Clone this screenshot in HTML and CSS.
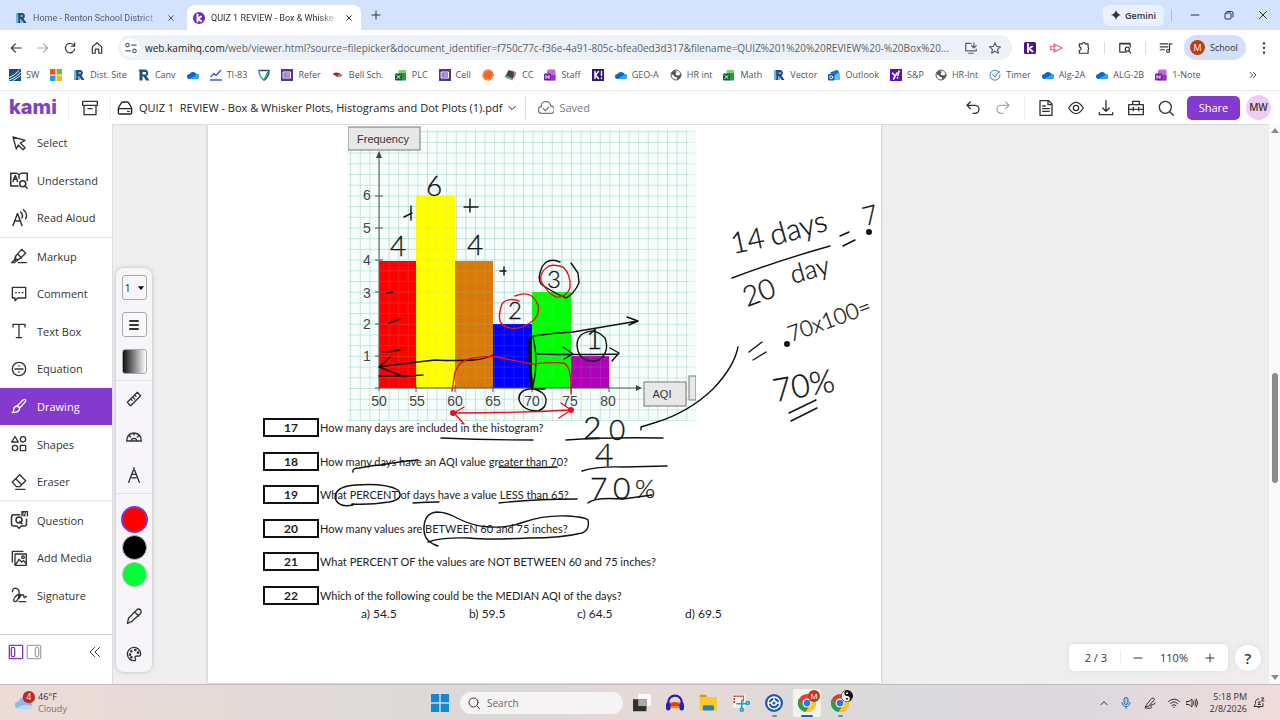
FILE: index.html
```html
<!DOCTYPE html>
<html lang="en">
<head>
	<meta charset="UTF-8">
	<meta name="viewport" content="width=device-width, initial-scale=1.0">
	<title>QUIZ 1 REVIEW - Box &amp; Whisker Plots</title>
	<link rel="stylesheet" href="styles.css">
</head>
<body>

<!-- shared icons -->
<svg class="sprite" aria-hidden="true">
	<symbol id="i-close" viewBox="0 0 24 24"><path d="M5 5l14 14M19 5L5 19"/></symbol>
	<symbol id="i-plus" viewBox="0 0 24 24"><path d="M12 4v16M4 12h16"/></symbol>
	<symbol id="i-minus" viewBox="0 0 24 24"><path d="M4 12h16"/></symbol>
	<symbol id="i-restore" viewBox="0 0 24 24"><rect x="4" y="8" width="12" height="12" rx="2"/><path d="M8 5h9a3 3 0 0 1 3 3v8"/></symbol>
	<symbol id="i-back" viewBox="0 0 24 24"><path d="M21 12H4M11 5l-7 7 7 7"/></symbol>
	<symbol id="i-forward" viewBox="0 0 24 24"><path d="M3 12h17M13 5l7 7-7 7"/></symbol>
	<symbol id="i-reload" viewBox="0 0 24 24"><path d="M19 8a8 8 0 1 0 1 6M20 3v6h-6"/></symbol>
	<symbol id="i-home" viewBox="0 0 24 24"><path d="M4 10l8-7 8 7v11h-5v-7H9v7H4z"/></symbol>
	<symbol id="i-tune" viewBox="0 0 24 24"><circle cx="6" cy="7" r="3"/><path d="M13 7h8M3 17h8"/><circle cx="18" cy="17" r="3"/></symbol>
	<symbol id="i-install" viewBox="0 0 24 24"><path d="M12 4H3v13h18v-3M8 21h8M17 3v9M13 8l4 4 4-4"/></symbol>
	<symbol id="i-star" viewBox="0 0 24 24"><path d="M12 3l2.700 6.200 6.700.6-5.100 4.500 1.500 6.600L12 17.400 6.200 20.900l1.500-6.600L2.600 9.800l6.700-.6z"/></symbol>
	<symbol id="i-puzzle" viewBox="0 0 24 24"><path d="M4 5h5a2.500 2.500 0 0 1 5 0h5v6a2.500 2.500 0 0 1 0 4v6H4v-5a3 3 0 0 0 0-6z"/></symbol>
	<symbol id="i-lens" viewBox="0 0 24 24"><path d="M11 19H3V4h18v6M3 5h18M14 19H9"/><circle cx="16" cy="14" r="3.500"/><path d="M19 17l3 4"/></symbol>
	<symbol id="i-playlist" viewBox="0 0 24 24"><path d="M2 5h13M2 10h13M2 15h7M18 17V5h4"/><circle cx="15.500" cy="17" r="2.500"/></symbol>
	<symbol id="i-dots" viewBox="0 0 24 24"><g fill="currentColor" stroke="none"><circle cx="12" cy="4" r="2"/><circle cx="12" cy="12" r="2"/><circle cx="12" cy="20" r="2"/></g></symbol>
	<symbol id="b-renton" viewBox="0 0 24 24"><g stroke="none"><path fill="#78b4d8" d="M2 2h12v20H2z"/><path fill="#1d4f78" d="M6 2h9a6 6 0 0 1 2 11l6 9h-6l-5-8h-2v8H5l2-4zM11 6v4h4V6z"/></g></symbol>
	<symbol id="b-cloud" viewBox="0 0 24 24"><g stroke="none"><path fill="#1263c4" d="M5 20a5 5 0 0 1 0-10 8 8 0 0 1 14 0 5 5 0 0 1 0 10z"/><path fill="#28a8f0" d="M5 20L20 10a5 5 0 0 1-1 10z"/></g></symbol>
	<symbol id="b-list" viewBox="0 0 24 24"><path stroke="none" fill="#57319b" d="M0 0h24v24H0z"/><path stroke="#fff" d="M5 6h14v12H5zM10 10h7M10 14h7M7 10h1M7 14h1"/></symbol>
	<symbol id="b-excel" viewBox="0 0 24 24"><g stroke="none"><path fill="#7bd067" d="M7 2h15v18H7z"/><path fill="#259a3e" d="M12 8h10v15H12z"/><rect fill="#0d6330" y="9" width="14" height="14" rx="2"/></g><path stroke="#fff" d="M4 13l6 6M10 13l-6 6"/></symbol>
	<symbol id="b-onenote" viewBox="0 0 24 24"><g stroke="none"><rect fill="#c665dc" x="6" y="1" width="17" height="22" rx="3"/><path fill="#9332c0" d="M14 12h9v11h-9z"/><rect fill="#7619a0" y="9" width="14" height="14" rx="2"/></g><path stroke="#fff" d="M4 19v-6l6 6v-6"/></symbol>
	<symbol id="b-globe" viewBox="0 0 24 24"><circle cx="12" cy="12" r="10" stroke="#555"/><path stroke="none" fill="#555" d="M4 6l6-3 4 3-3 2 1 4 6 1 3-3v7l-7 5v-5l-5-2-3-4-3 1z"/></symbol>
	<symbol id="s-chrome" viewBox="0 0 24 24"><g stroke="none"><circle cx="12" cy="12" r="12" fill="#e23f31"/><path fill="#2b9e4b" d="M1.600 6L7 15l5 3-2 6A12 12 0 0 1 1.600 6z"/><path fill="#fbc81e" d="M12 7h11a12 12 0 0 1-13 17l6-9z"/><circle cx="12" cy="12" r="6" fill="#fff"/><circle cx="12" cy="12" r="4.500" fill="#2b78e4"/></g></symbol>
</svg>

<header class="browser">
	<div class="tabs">
		<div class="tab">
			<svg class="icon icon-s"><use href="#b-renton"/></svg>
			<span class="tab-title">Home - Renton School District</span>
			<button class="plain" aria-label="Close tab"><svg class="icon icon-x"><use href="#i-close"/></svg></button>
		</div>
		<div class="tab active">
			<svg class="icon icon-s" viewBox="0 0 24 24"><circle cx="12" cy="12" r="12" fill="#6f2bab" stroke="none"/><path stroke="#fff" stroke-width="4" d="M9 5v14M16 9l-6 4 6 5"/></svg>
			<span class="tab-title">QUIZ 1 REVIEW - Box &amp; Whiske</span>
			<button class="plain" aria-label="Close tab"><svg class="icon icon-x"><use href="#i-close"/></svg></button>
		</div>
		<button class="plain new-tab" aria-label="New tab"><svg class="icon icon-s"><use href="#i-plus"/></svg></button>
		<button class="gemini"><svg class="icon icon-g" viewBox="0 0 24 24"><path fill="currentColor" stroke="none" d="M12 0q2 10 12 12-10 2-12 12-2-10-12-12Q10 10 12 0z"/></svg>Gemini</button>
		<span class="tab-sep"></span>
		<div class="window-buttons">
			<button class="plain" aria-label="Minimize"><svg class="icon icon-s"><use href="#i-minus"/></svg></button>
			<button class="plain" aria-label="Restore"><svg class="icon icon-s"><use href="#i-restore"/></svg></button>
			<button class="plain" aria-label="Close"><svg class="icon icon-s"><use href="#i-close"/></svg></button>
		</div>
	</div>

	<div class="toolbar">
		<button class="plain nav-btn" aria-label="Back"><svg class="icon"><use href="#i-back"/></svg></button>
		<button class="plain nav-btn dim" aria-label="Forward"><svg class="icon"><use href="#i-forward"/></svg></button>
		<button class="plain nav-btn" aria-label="Reload"><svg class="icon"><use href="#i-reload"/></svg></button>
		<button class="plain nav-btn" aria-label="Home"><svg class="icon"><use href="#i-home"/></svg></button>
		<div class="address">
			<span class="site-info"><svg class="icon icon-s"><use href="#i-tune"/></svg></span>
			<span class="url"><b>web.kamihq.com</b>/web/viewer.html?source=filepicker&amp;document_identifier=f750c77c-f36e-4a91-805c-bfea0ed3d317&amp;filename=QUIZ%201%20%20REVIEW%20-%20Box%20...</span>
			<button class="plain" aria-label="Install app"><svg class="icon"><use href="#i-install"/></svg></button>
			<button class="plain" aria-label="Bookmark"><svg class="icon icon-s"><use href="#i-star"/></svg></button>
		</div>
		<button class="plain nav-btn" aria-label="Kami extension"><svg class="icon kami-ext" viewBox="0 0 24 24"><rect width="24" height="24" rx="3" fill="#4c177d" stroke="none"/><path stroke="#fff" stroke-width="4" d="M8 4v16M16 9l-6 4 7 6"/></svg></button>
		<button class="plain nav-btn pink" aria-label="Screencastify"><svg class="icon" viewBox="0 0 24 24"><path d="M7 5l14 7-14 7zM1 9h9M1 15h9M1 9v6"/></svg></button>
		<button class="plain nav-btn" aria-label="Extensions"><svg class="icon"><use href="#i-puzzle"/></svg></button>
		<span class="bar-sep"></span>
		<button class="plain nav-btn" aria-label="Search page"><svg class="icon"><use href="#i-lens"/></svg></button>
		<span class="bar-sep"></span>
		<button class="plain nav-btn" aria-label="Media"><svg class="icon"><use href="#i-playlist"/></svg></button>
		<button class="profile"><span class="avatar">M</span>School</button>
		<button class="plain nav-btn" aria-label="Menu"><svg class="icon icon-s"><use href="#i-dots"/></svg></button>
	</div>

	<nav class="bookmarks">
		<div class="bookmark-list">
			<a href="#"><svg class="icon icon-s" viewBox="0 0 24 24"><path stroke="none" fill="#164f83" d="M0 0h24v24H0z"/><path stroke="#fff" d="M1 17Q11 13 20 3M1 22Q14 17 23 7M8 23q8-4 15-10"/></svg>SW</a>
			<a href="#" aria-label="Microsoft"><svg class="icon icon-s" viewBox="0 0 24 24"><g stroke="none"><path fill="#ee5223" d="M0 0h11v11H0z"/><path fill="#80b91d" d="M13 0h11v11H13z"/><path fill="#14a1e8" d="M0 13h11v11H0z"/><path fill="#fcb716" d="M13 13h11v11H13z"/></g></svg></a>
			<a href="#"><svg class="icon icon-s"><use href="#b-renton"/></svg>Dist. Site</a>
			<a href="#"><svg class="icon icon-s" viewBox="0 0 24 24"><path fill="#20547d" stroke="none" d="M1 1h14a7 7 0 0 1 2 13l6 9h-7l-5-8H9v8H3V6zM9 6v5h5a2 2 0 0 0 0-5z"/></svg>Canv</a>
			<a href="#" aria-label="OneDrive"><svg class="icon icon-s"><use href="#b-cloud"/></svg></a>
			<a href="#"><svg class="icon icon-s" viewBox="0 0 24 24"><path stroke="#3f5fc0" stroke-width="3" d="M2 15l6-6 4 4 9-10M0 22h24"/></svg>TI-83</a>
			<a href="#" aria-label="Shield"><svg class="icon icon-s" viewBox="0 0 24 24"><path stroke="#2c4961" stroke-width="3" d="M2 3h20q0 13-10 19"/><path stroke="#2ca993" stroke-width="3" d="M2 3q0 13 10 19l7-15"/></svg></a>
			<a href="#"><svg class="icon icon-s"><use href="#b-list"/></svg>Refer</a>
			<a href="#"><svg class="icon icon-s" viewBox="0 0 24 24"><g stroke="none"><path fill="#a0283a" d="M1 10q9-6 18 1l-8 5z"/><path fill="#999" d="M11 11h12l-8 7z"/></g></svg>Bell Sch.</a>
			<a href="#"><svg class="icon icon-s"><use href="#b-excel"/></svg>PLC</a>
			<a href="#"><svg class="icon icon-s"><use href="#b-list"/></svg>Cell</a>
			<a href="#" aria-label="Sun"><svg class="icon icon-s" viewBox="0 0 24 24"><circle cx="12" cy="12" r="8" fill="#ef6a1f" stroke="none"/><circle cx="12" cy="12" r="9" stroke="#ef6a1f" stroke-width="5" stroke-linecap="butt" stroke-dasharray="3 1"/></svg></a>
			<a href="#"><svg class="icon icon-s" viewBox="0 0 24 24"><g stroke="none"><path fill="#444" d="M7 2l14 4-6 16L0 16z"/><path fill="#c77a98" d="M17 5l6 2-5 13z"/><path fill="#60b49a" d="M3 13l14 7-2 3-13-5z"/></g></svg>CC</a>
			<a href="#"><svg class="icon icon-s"><use href="#b-onenote"/></svg>Staff</a>
			<a href="#" aria-label="Kahoot"><svg class="icon icon-s" viewBox="0 0 24 24"><path fill="#321377" stroke="none" d="M0 0h24v24H0z"/><path stroke="#fff" stroke-width="3" d="M6 5v14M13 5l-6 7 6 7M19 5v8M19 18v1"/></svg></a>
			<a href="#"><svg class="icon icon-s"><use href="#b-cloud"/></svg>GEO-A</a>
			<a href="#"><svg class="icon icon-s"><use href="#b-globe"/></svg>HR int</a>
			<a href="#"><svg class="icon icon-s"><use href="#b-excel"/></svg>Math</a>
			<a href="#"><svg class="icon icon-s"><use href="#b-renton"/></svg>Vector</a>
			<a href="#"><svg class="icon icon-s" viewBox="0 0 24 24"><g stroke="none"><path fill="#58c4f3" d="M4 7l14-6 6 8v13H8z"/><path fill="#2368cf" d="M5 7L19 2l3 5-14 8z"/><rect fill="#1659bb" y="10" width="13" height="13" rx="2"/></g><circle cx="6.500" cy="16.500" r="3" stroke="#fff"/></svg>Outlook</a>
			<a href="#"><svg class="icon icon-s" viewBox="0 0 24 24"><path fill="#5714b8" stroke="none" d="M0 0h24v24H0z"/><path stroke="#fff" stroke-width="3" d="M5 8l5 6M14 8L7 20M18 4l-2 9M15 17v1"/></svg>S&amp;P</a>
			<a href="#"><svg class="icon icon-s"><use href="#b-globe"/></svg>HR-Int</a>
			<a href="#"><svg class="icon icon-s" viewBox="0 0 24 24"><path stroke="#3d7cc0" d="M21 8a10 10 0 1 0 1 4M7 11l5 5L21 4"/></svg>Timer</a>
			<a href="#"><svg class="icon icon-s"><use href="#b-cloud"/></svg>Alg-2A</a>
			<a href="#"><svg class="icon icon-s"><use href="#b-cloud"/></svg>ALG-2B</a>
			<a href="#"><svg class="icon icon-s"><use href="#b-onenote"/></svg>1-Note</a>
		</div>
		<button class="plain more" aria-label="More bookmarks"><svg class="icon icon-x" viewBox="0 0 24 24"><path d="M3 4l8 8-8 8M13 4l8 8-8 8"/></svg></button>
	</nav>
</header>

<header class="kami-bar">
	<a class="logo" href="#">kami</a>
	<button class="plain archive" aria-label="Archive"><svg class="icon" viewBox="0 0 24 24"><path d="M1 2h22v6H1zM3 8v14h18V8M9 13h6"/></svg></button>
	<button class="plain doc-name">
		<svg class="icon" viewBox="0 0 24 24"><path d="M2 12l4-7q1-2 3-2h6q2 0 3 2l4 7v7q0 2-2 2H4q-2 0-2-2zM2 13h20M16 17h1M19 17h0"/></svg>
		<span>QUIZ 1  REVIEW - Box &amp; Whisker Plots, Histograms and Dot Plots (1).pdf</span>
		<svg class="icon icon-x" viewBox="0 0 24 24"><path d="M2 7l10 10L22 7"/></svg>
	</button>
	<div class="saved"><svg class="icon" viewBox="0 0 24 24"><path d="M6 20a5 5 0 0 1-1-10 7 7 0 0 1 14-1 5.500 5.500 0 0 1 0 11zM8 13l3 3 5-5"/></svg>Saved</div>
	<div class="kami-tools">
		<button class="plain" aria-label="Undo"><svg class="icon" viewBox="0 0 24 24"><path d="M8 3L3 8l5 5M3 8h12a6 6 0 0 1 0 12h-3"/></svg></button>
		<button class="plain dim" aria-label="Redo"><svg class="icon" viewBox="0 0 24 24"><path d="M16 3l5 5-5 5M21 8H9a6 6 0 0 0 0 12h3"/></svg></button>
		<span class="kami-sep"></span>
		<button class="plain" aria-label="Notes"><svg class="icon" viewBox="0 0 24 24"><path d="M3 1h13l5 5v17H3zM15 2v5h5M7 9h4M7 13h10M7 17h10"/></svg></button>
		<button class="plain" aria-label="View"><svg class="icon" viewBox="0 0 24 24"><path d="M1 12q11-17 22 0-11 17-22 0z"/><circle cx="12" cy="12" r="4"/></svg></button>
		<button class="plain" aria-label="Download"><svg class="icon" viewBox="0 0 24 24"><path d="M12 1v16M7 12l5 5 5-5M2 19v3h20v-3"/></svg></button>
		<button class="plain" aria-label="Toolbox"><svg class="icon" viewBox="0 0 24 24"><path d="M1 7h22v15H1zM7 7V2h10v5M1 14h6M10 14h4M17 14h6M8 11v5M16 11v5"/></svg></button>
		<button class="plain" aria-label="Search"><svg class="icon" viewBox="0 0 24 24"><circle cx="11" cy="11" r="9"/><path d="M18 18l5 5"/></svg></button>
		<button class="share">Share</button>
		<span class="user">MW</span>
	</div>
</header>

<main>
	<aside class="sidebar">
		<nav class="tools">
			<a href="#"><svg class="icon" viewBox="0 0 24 24"><path d="M3 3l18 5-7 4 7 7-3 3-7-7-3 6z"/></svg>Select</a>
			<a href="#"><svg class="icon icon-l" viewBox="0 0 24 24"><path d="M11 20H1V3h8l3 2 3-2h8v10M12 5v5M4 14l3-8 2 5 1 3M5 11h4"/><circle cx="17" cy="17" r="4"/><path d="M20 20l3 3"/></svg>Understand</a>
			<a href="#"><svg class="icon icon-l" viewBox="0 0 24 24"><path d="M4 22l6-16 6 16M6 16h8M14 4q4 3 2 8M18 1q6 5 3 12"/></svg>Read Aloud</a>
			<a class="group" href="#"><svg class="icon" viewBox="0 0 24 24"><path d="M7 12L16 2l6 6-10 9H7zM7 12l-2 6 3 2 4-3M5 18l-4 4h4l2-2M11 22h12M10 9l6 6"/></svg>Markup</a>
			<a href="#"><svg class="icon" viewBox="0 0 24 24"><path d="M2 2h20v16H10l-4 4v-4H2zM7 10h1M12 10h1M17 10h1"/></svg>Comment</a>
			<a href="#"><svg class="icon" viewBox="0 0 24 24"><path d="M3 6V2h18v4M12 2v20M8 22h8"/></svg>Text Box</a>
			<a href="#"><svg class="icon" viewBox="0 0 24 24"><circle cx="12" cy="12" r="10"/><path d="M6 12h12M12 7v1M12 16v1"/></svg>Equation</a>
			<a class="current" href="#"><svg class="icon" viewBox="0 0 24 24"><path d="M9 12L18 3q5-2 4 2l-9 10zM9 12q2 0 4 3 0 7-11 7 3-2 2-5 0-4 5-5z"/></svg>Drawing</a>
			<a href="#"><svg class="icon" viewBox="0 0 24 24"><path d="M6 1l5 8H1zM14 14h8v8h-8z"/><circle cx="18" cy="5" r="4"/><circle cx="6" cy="18" r="4"/></svg>Shapes</a>
			<a href="#"><svg class="icon" viewBox="0 0 24 24"><path d="M2 12L13 1l9 9-9 9H8zM7 7l9 9M7 23h14"/></svg>Eraser</a>
			<a class="group" href="#"><svg class="icon icon-l" viewBox="0 0 24 24"><path d="M13 5H5Q2 5 2 8v9q0 3 3 3h4l3 3 3-3h4q3 0 3-3v-6"/><circle cx="12" cy="12" r="4"/><path d="M13 14l3 3"/><path fill="currentColor" stroke="none" d="M15 0h9v7h-9z"/><path stroke="#fff" stroke-width="1" d="M17 6l2-4 2 4M22 2v4"/></svg>Question</a>
			<a href="#"><svg class="icon" viewBox="0 0 24 24"><path d="M18 2H2v16M6 6h17v17H6zM7 22l5-8 4 4 3-2 4 5"/><circle cx="18" cy="11" r="2"/></svg>Add Media</a>
			<a href="#"><svg class="icon" viewBox="0 0 24 24"><path d="M2 7Q3 1 8 2q5 1 4 9-1 11-6 11-4-1 0-7 4-5 8-4 0 5-2 6 4-7 7-5 0 4 1 4l3-2M12 22h10"/></svg>Signature</a>
		</nav>
		<div class="side-footer">
			<button class="plain violet" aria-label="Left panel"><svg class="icon" viewBox="0 0 24 24"><rect x="2" y="2" width="20" height="20" rx="1"/><rect x="5" y="5" width="5" height="14" rx="2"/></svg></button>
			<button class="plain dim" aria-label="Right panel"><svg class="icon" viewBox="0 0 24 24"><rect x="2" y="2" width="20" height="20" rx="1"/><rect x="14" y="5" width="5" height="14" rx="2"/></svg></button>
			<button class="plain collapse" aria-label="Collapse"><svg class="icon icon-s" viewBox="0 0 24 24"><path d="M11 3l-9 9 9 9M21 3l-9 9 9 9"/></svg></button>
		</div>
	</aside>

	<section class="viewer">
		<div class="palette">
			<label class="size-box"><select aria-label="Line size"><option>1</option></select><svg viewBox="0 0 8 5"><path d="M0 0h8L4 5z"/></svg></label>
			<button class="square" aria-label="Line style"><svg class="icon icon-s" viewBox="0 0 24 24"><path stroke-width="4" d="M4 4h16M4 12h16M4 20h16"/></svg></button>
			<button class="square shade" aria-label="Opacity"></button>
			<div class="palette-group">
				<button class="plain" aria-label="Ruler"><svg class="icon" viewBox="0 0 24 24"><path d="M2 17L17 2l5 5L7 22zM13 6l2 2M10 9l3 3M7 12l2 2"/></svg></button>
				<button class="plain" aria-label="Protractor"><svg class="icon" viewBox="0 0 24 24"><path d="M1 18q0-11 11-12 11 1 11 12zM8 18q0-4 4-4t4 4M12 6v3M5 10l2 2M19 10l-2 2"/></svg></button>
				<button class="plain" aria-label="Compass"><svg class="icon" viewBox="0 0 24 24"><path d="M12 1v3M4 23l7-18h2l7 18M7 15q5 3 10 0M9 11h6"/></svg></button>
			</div>
			<div class="palette-colors">
				<button class="swatch red" aria-label="Red"></button>
				<button class="swatch black" aria-label="Black"></button>
				<button class="swatch green" aria-label="Green"></button>
			</div>
			<div class="palette-more">
				<button class="plain" aria-label="Pencil"><svg class="icon" viewBox="0 0 24 24"><path d="M4 15L16 3q3-3 6 0 2 3-1 6L9 20l-7 3zM13 6l6 6"/></svg></button>
				<button class="plain" aria-label="Colors"><svg class="icon" viewBox="0 0 24 24"><path d="M13 22A10 10 0 1 1 22 12q0 4-5 3-5 0-3 4 1 3-1 3z"/><circle cx="8" cy="8" r="1"/><circle cx="14" cy="6" r="1"/><circle cx="18" cy="10" r="1"/><circle cx="6" cy="13" r="1"/><circle cx="8" cy="17" r="1"/></svg></button>
			</div>
		</div>

		<article class="page">
			<svg class="chart" viewBox="348 124 348 297" role="img" aria-label="Histogram of AQI values">
				<defs>
					<pattern id="grid" x="379" y="388" width="9.600" height="10.700" patternUnits="userSpaceOnUse">
						<path d="M0 0v10.700" stroke="#a9c2c4"/>
						<path d="M0 0h9.600" stroke="#8fd6c4"/>
					</pattern>
				</defs>
				<path fill="#f6fefc" d="M348 130h348v291H348z"/>
				<path fill="url(#grid)" d="M348 130h340v291H348z"/>
				<path fill="url(#grid)" opacity=".5" d="M688 130h8v291h-8z"/>
				<g class="bars">
					<path fill="#f00" d="M379 261h37v127h-37z"/>
					<path fill="#ff0" d="M416 196h39v192h-39z"/>
					<path fill="#d97b0b" d="M455 261h38v127h-38z"/>
					<path fill="#00f" d="M493 324h39v64h-39z"/>
					<path fill="#0f0" d="M532 292h39v96h-39z"/>
					<path fill="#b000b8" d="M571 356h38v32h-38z"/>
				</g>
				<path fill="url(#grid)" opacity=".3" d="M379 196h230v192H379z"/>
				<path class="axis" d="M379 391V155M375 388h262M375 356h8M375 324h8M375 292h8M375 260h8M375 228h8M375 196h8M416 385v7M455 385v7M493 385v7M532 385v7M571 385v7M609 385v7"/>
				<path fill="#444" d="M376 158l3-7 3 7zM636 385l6 3-6 3z"/>
				<g class="ticks">
					<text x="367" y="200">6</text><text x="367" y="233">5</text><text x="367" y="265">4</text>
					<text x="367" y="298">3</text><text x="367" y="329">2</text><text x="367" y="361">1</text>
					<text x="379" y="406">50</text><text x="417" y="406">55</text><text x="455" y="406">60</text><text x="493" y="406">65</text>
					<text x="532" y="406">70</text><text x="570" y="406">75</text><text x="608" y="406">80</text>
				</g>
				<g class="axis-box">
					<rect x="348" y="127" width="72" height="23"/><text x="383" y="143">Frequency</text>
					<rect x="689" y="376" width="7" height="24"/>
					<rect x="644" y="382" width="42" height="24"/><text x="662" y="398">AQI</text>
				</g>
			</svg>

			<ol class="questions">
				<li><b>17</b>How many days are included in the histogram?</li>
				<li><b>18</b>How many days have an AQI value greater than 70?</li>
				<li><b>19</b>What PERCENT of days have a value LESS than 65?</li>
				<li><b>20</b>How many values are BETWEEN 60 and 75 inches?</li>
				<li><b>21</b>What PERCENT OF the values are NOT BETWEEN 60 and 75 inches?</li>
				<li><b>22</b>Which of the following could be the MEDIAN AQI of the days?</li>
			</ol>
			<div class="choices"><span>a) 54.5</span><span>b) 59.5</span><span>c) 64.5</span><span>d) 69.5</span></div>

			<!-- pen annotations -->
			<svg class="ink" viewBox="208 124 673 560">
				<g class="pen">
					<path d="M404 218l8-4M411 207v14M464 208h14M470 200v13M500 272h6M504 268v8"/>
					<path d="M387 294l6-1M389 324l11-4M383 353q9 0 17-2"/>
					<path d="M379 368q28-4 56-7 22 1 38 0 13-1 20-5M390 358l-11 10 26 10M379 377h28l16-1"/>
					<path stroke-width="3" d="M530 340q-1 25 2 48"/>
					<path d="M533 338q6 24 0 49"/>
					<path d="M533 337q20-3 40-4l65-11M627 318l11 4-9 4M537 355q40 1 81 0M563 348l10 7-9 5M610 349l9 5-7 8"/>
					<path d="M581 336q13-9 24 3 5 14-6 22-17 4-21-9-3-10 3-16"/>
					<path d="M560 263q-12-5-18 5-5 12-1 17 11 8 25 14 8-4 13-15l-1-10-7-10"/>
					<path d="M545 390h-16q-11 2-10 11 4 11 19 11 9-3 8-12-1-7-12-10"/>
					<path d="M441 439q45 2 92 2M566 441q40-3 97-2M582 472q16-5 41-4l44-1M588 504q6-6 35-4l29-4"/>
					<path d="M353 473q-1-4 6-4 15-3 22-3 15-3 37-5M499 468q25 1 58 0M413 504q13-1 26-1M499 504q35-4 78-4"/>
					<path d="M353 506q-15 3-18-7 0-12 21-13 30-2 42 5 7 9-9 12-19 3-37 2"/>
					<path d="M438 547q-13-4-14-15-1-18 13-19 9 0 20 6 15 8 32 9 20 1 35-5 20-7 43-6 18 1 21 4 2 10-6 13-20 5-53 5-40 2-60 0-27-1-41 4"/>
					<path d="M641 431v-3l16-5q32-10 56-33 21-22 25-42"/>
					<path d="M732 279q45-17 98-32M840 237l9-4M843 247l12-6M749 353l13-10M753 361l13-8M789 414l27-13M791 422l26-13"/>
					<circle class="dot" cx="869" cy="233" r="2"/><circle class="dot" cx="787" cy="345" r="2"/>
				</g>
				<g class="pen red-pen">
					<path d="M452 392q1-6 3-19 4-12 18-14 12-2 24-1 13 3 36 7 20-2 30-1 9 2 8 31"/>
					<path d="M519 302q-12-4-17 3-7 20 5 23 12 5 27-7 8-10 2-19-6-11-21-5"/>
					<path d="M549 267q-10 6-8 15 7 13 15 16 10 1 14-9 1-14-7-21-8-3-14-1"/>
					<path d="M453 414q60 0 118-3M464 408l-10 6 10 11M561 404l10 7-12 8"/>
					<circle class="dot" cx="453" cy="414" r="2"/><circle class="dot" cx="571" cy="411" r="2"/>
				</g>
				<g class="hand">
					<text font-size="28" x="426" y="197">6</text>
					<text font-size="28" x="390" y="257">4</text>
					<text font-size="28" x="467" y="256">4</text>
					<text font-size="24" x="547" y="289">3</text>
					<text font-size="24" x="508" y="320">2</text>
					<text font-size="28" x="586" y="350">1</text>
					<text font-size="32" x="583" y="440">2</text>
					<text font-size="28" x="609" y="441">0</text>
					<text font-size="32" x="595" y="467">4</text>
					<text font-size="30" x="590" y="500">7</text>
					<text font-size="30" x="613" y="500">0</text>
					<text font-size="26" x="635" y="499">%</text>
					<text font-size="29" transform="translate(733 255) rotate(-12)">14</text>
					<text font-size="30" transform="translate(773 247) rotate(-16)">days</text>
					<text font-size="26" transform="translate(865 227) rotate(-14)">7</text>
					<text font-size="28" transform="translate(747 308) rotate(-20)">20</text>
					<text font-size="26" transform="translate(793 285) rotate(-16)">day</text>
					<text font-size="22" transform="translate(791 343) rotate(-20)">70x100=</text>
					<text font-size="32" transform="translate(775 403) rotate(-10)">70%</text>
				</g>
			</svg>
		</article>

		<div class="zoom-bar">
			<div class="pager">
				<span class="page-no">2 / 3</span>
				<button class="plain" aria-label="Zoom out"><svg class="icon icon-s"><use href="#i-minus"/></svg></button>
				<span>110%</span>
				<button class="plain" aria-label="Zoom in"><svg class="icon icon-s"><use href="#i-plus"/></svg></button>
			</div>
			<button class="help">?</button>
		</div>
	</section>

	<div class="scrollbar"><span class="arrow up"></span><span class="thumb"></span><span class="arrow down"></span></div>
</main>

<footer class="taskbar">
	<div class="weather">
		<svg viewBox="0 0 24 24"><path fill="#8db9ee" d="M5 20a4 4 0 0 1 0-8 7 7 0 0 1 13-1 5 5 0 0 1 0 9z"/><path fill="#bcdaf8" d="M3 19q8-5 19-2-1 3-4 3H5z"/><circle cx="17" cy="7" r="7" fill="#b92b27"/><text x="17" y="10">4</text></svg>
		<div><div>46°F</div><div class="muted">Cloudy</div></div>
	</div>
	<div class="apps">
		<button class="plain" aria-label="Start"><svg class="app" viewBox="0 0 24 24"><path fill="#1687d4" d="M0 0h11v11H0zM13 0h11v11H13zM0 13h11v11H0zM13 13h11v11H13z"/></svg></button>
		<label class="search"><svg class="icon icon-s" viewBox="0 0 24 24"><circle cx="11" cy="11" r="9"/><path d="M18 18l5 5"/></svg><input type="text" placeholder="Search" aria-label="Search"></label>
		<button class="plain app-btn" aria-label="Task view"><svg class="app" viewBox="0 0 24 24"><path fill="#fafafa" d="M7 0h17v16H7z"/><path fill="#30302e" d="M0 7h18v16H0z"/><path fill="#aaa" d="M7 7h11v9H7z"/></svg></button>
		<button class="plain app-btn" aria-label="Audacity"><svg class="app" viewBox="0 0 24 24"><path fill="#f08a18" d="M5 11h14v8H5z"/><path fill="#e23822" d="M5 14q7-6 14 0v2H5z"/><path fill="none" stroke="#2222b8" stroke-width="3" d="M3 17V11a9 9 0 0 1 18 0v6"/><rect fill="#2222c8" y="11" width="6" height="11" rx="3"/><rect fill="#2222c8" x="18" y="11" width="6" height="11" rx="3"/></svg></button>
		<button class="plain app-btn" aria-label="Files"><svg class="app" viewBox="0 0 24 24"><path fill="#d99816" d="M1 1h8l3 4H1z"/><path fill="#fac931" d="M1 4h23v18H1z"/><rect fill="#2185c4" x="5" y="15" width="15" height="7" rx="2"/></svg></button>
		<button class="plain app-btn" aria-label="Snipping tool"><svg class="app" viewBox="0 0 24 24"><path fill="#f5f2ef" d="M1 1h17v17H1z"/><path fill="none" stroke="#c23c34" stroke-width="2" stroke-dasharray="3 1" d="M3 12V3h12v8"/><path fill="none" stroke="#1b9acb" stroke-width="2" d="M6 13h13M13 8v12"/><circle cx="21" cy="12" r="2" fill="none" stroke="#1b9acb" stroke-width="2"/><circle cx="13" cy="21" r="2" fill="none" stroke="#1b9acb" stroke-width="2"/></svg></button>
		<button class="plain app-btn open" aria-label="Pokemon"><svg class="app" viewBox="0 0 24 24"><circle cx="12" cy="12" r="12" fill="#1f58b6"/><circle cx="12" cy="12" r="8" fill="none" stroke="#fff" stroke-width="2"/><path stroke="#fff" stroke-width="2" d="M4 12h16M12 4v5"/><circle cx="12" cy="12" r="4" fill="#fff"/><circle cx="12" cy="12" r="2" fill="#1f58b6"/></svg></button>
		<button class="plain app-btn open focused" aria-label="Chrome"><svg class="app"><use href="#s-chrome"/></svg><span class="badge">M</span></button>
		<button class="plain app-btn open" aria-label="Chrome profile 2"><svg class="app"><use href="#s-chrome"/></svg><svg class="badge yin" viewBox="0 0 24 24"><circle cx="12" cy="12" r="12" fill="#111"/><path fill="#fff" d="M12 1a11 11 0 0 0 0 22 5.500 5.500 0 0 0 0-11 5.500 5.500 0 0 1 0-11z"/><circle cx="12" cy="6.500" r="2" fill="#fff"/><circle cx="12" cy="17.500" r="2" fill="#111"/></svg></button>
	</div>
	<div class="tray">
		<svg class="icon icon-x" viewBox="0 0 24 24"><path d="M3 17l9-9 9 9"/></svg>
		<svg class="icon icon-s mic" viewBox="0 0 24 24"><rect x="8" y="1" width="8" height="14" rx="4" fill="#a8c7e8"/><path d="M4 11q1 8 8 8t8-8M12 19v4"/></svg>
		<svg class="icon icon-s" viewBox="0 0 24 24"><path d="M4 17L15 3q5-3 6 2L10 18l-7 2zM2 22q18 2 12-3-1-4 3-4 4 1 5-3"/></svg>
		<svg class="icon icon-s" viewBox="0 0 24 24"><path d="M1 9q11-10 22 0M5 13q7-7 14 0M8 17q4-4 8 0M12 20v1"/></svg>
		<svg class="icon icon-s" viewBox="0 0 24 24"><path d="M1 9h5l6-5v16l-6-5H1zM15 9q2 3 0 6M18 6q4 6 0 12M21 4q5 8 0 16"/></svg>
		<div class="clock"><div>5:18 PM</div><div>2/8/2026</div></div>
		<svg class="icon icon-s bell" viewBox="0 0 24 24"><path d="M12 4q-8-1-7 9l-3 6h18v-6M9 20q2 4 5 0M10 10h5l-5 5h5M17 2h5l-5 6h5"/></svg>
	</div>
</footer>

</body>
</html>
```
FILE: styles.css
```css
* {
	box-sizing: border-box;
}

body {
	margin: 0;
	height: 100vh;
	display: flex;
	flex-direction: column;
	overflow: hidden;
	font-family: "Open Sans", "Noto Sans", sans-serif;
	font-size: 11px;
	color: #333;
	background: #fff;
}

a {
	color: inherit;
	text-decoration: none;
}

button, input, select {
	font: inherit;
	color: inherit;
}

.sprite {
	position: absolute;
	width: 0;
	height: 0;
}

.icon {
	flex: none;
	display: block;
	width: 16px;
	height: 16px;
	fill: none;
	stroke: currentColor;
	stroke-width: 2;
	stroke-linecap: round;
	stroke-linejoin: round;
}

.icon-s {
	width: 12px;
	height: 12px;
}

.icon-x {
	width: 8px;
	height: 8px;
	stroke-width: 3;
}

.icon-g {
	width: 10px;
	height: 10px;
}

.icon-l {
	width: 18px;
	height: 18px;
}

.plain {
	display: flex;
	align-items: center;
	justify-content: center;
	padding: 0;
	border: 0;
	background: none;
}

.dim {
	color: #aaa;
}

.violet {
	color: #7f3ac8;
}

.pink {
	color: #ee5b98;
}

/* browser window */

.tabs {
	display: flex;
	align-items: center;
	height: 30px;
	padding-left: 7px;
	background: #d3e3fd;
	font-size: 9px;
}

.tab {
	display: flex;
	align-items: center;
	gap: 6px;
	width: 180px;
	height: 25px;
	align-self: flex-end;
	padding: 0 12px 0 8px;
	color: #555e6c;
}

.tab.active {
	width: 174px;
	padding-left: 6px;
	padding-right: 8px;
	background: #fff;
	border-radius: 8px 8px 0 0;
	color: #333;
}

.tab-title {
	flex: 1;
	font-family: Roboto, "Open Sans", sans-serif;
	white-space: nowrap;
	mask-image: linear-gradient(to right, #000 85%, transparent);
}

.new-tab {
	margin-left: 9px;
}

.gemini {
	display: flex;
	align-items: center;
	gap: 4px;
	height: 21px;
	margin-left: auto;
	padding: 0 8px;
	border: 0;
	border-radius: 6px;
	background: #e9f1fe;
	font-weight: 600;
}

.tab-sep {
	width: 1px;
	height: 12px;
	margin: 0 17px 0 7px;
	background: #a9c0e6;
}

.window-buttons {
	display: flex;
	gap: 22px;
	padding-right: 11px;
}

.toolbar {
	display: flex;
	align-items: center;
	gap: 9px;
	height: 35px;
	padding: 0 7px;
}

.nav-btn {
	width: 18px;
	height: 18px;
}

.toolbar .icon {
	width: 14px;
	height: 14px;
}

.toolbar .kami-ext {
	width: 12px;
	height: 12px;
}

.address {
	flex: 1;
	min-width: 0;
	display: flex;
	align-items: center;
	gap: 10px;
	height: 25px;
	margin-left: 3px;
	padding: 0 10px 0 3px;
	border-radius: 13px;
	background: #edf1f8;
	font-size: 10px;
	color: #5a5f66;
}

.site-info {
	display: flex;
	align-items: center;
	justify-content: center;
	width: 19px;
	height: 19px;
	border-radius: 50%;
	background: #fff;
	margin-right: -5px;
}

.url {
	flex: 1;
	overflow: hidden;
	white-space: nowrap;
}

.url b {
	font-weight: 400;
	color: #222;
}

.bar-sep {
	width: 1px;
	height: 12px;
	margin: 0 2px;
	background: #d3dbe8;
}

.profile {
	display: flex;
	align-items: center;
	gap: 5px;
	width: 62px;
	height: 25px;
	padding: 0 6px;
	border: 0;
	border-radius: 13px;
	background: #d3e0fa;
	font-size: 9px;
	white-space: nowrap;
}

.avatar {
	flex: none;
	width: 15px;
	height: 15px;
	line-height: 15px;
	border-radius: 50%;
	background: #bf3c0c;
	color: #fff;
	text-align: center;
}

.bookmarks {
	display: flex;
	align-items: center;
	justify-content: space-between;
	height: 26px;
	padding: 0 23px 6px 9px;
	border-bottom: 1px solid #e8e8e8;
	font-size: 9px;
	color: #50545a;
}

.bookmark-list {
	flex: 1;
	display: flex;
	justify-content: space-between;
	margin-right: 48px;
}

.bookmark-list a {
	display: flex;
	align-items: center;
	gap: 5px;
	white-space: nowrap;
}

/* kami header */

.kami-bar {
	display: flex;
	align-items: center;
	flex: none;
	height: 33px;
	padding: 0 9px;
	color: #333;
}

.logo {
	width: 60px;
	height: 24px;
	line-height: 22px;
	border-right: 1px solid #eee;
	font-family: Inter, sans-serif;
	font-size: 20px;
	font-weight: 800;
	color: #8040c0;
}

.archive {
	width: 42px;
	height: 24px;
	border-right: 1px solid #eee;
}

.doc-name {
	height: 22px;
	gap: 6px;
	padding: 0 9px 0 6px;
	border-right: 1px solid #ddd;
	color: #222;
	white-space: pre;
}

.saved {
	display: flex;
	align-items: center;
	gap: 5px;
	padding-left: 12px;
	color: #777;
}

.kami-tools {
	display: flex;
	align-items: center;
	gap: 14px;
	margin-left: auto;
}

.kami-sep {
	width: 1px;
	height: 22px;
	margin: 0 -1px;
	background: #eee;
}

.share {
	width: 53px;
	height: 24px;
	margin: 0 -8px 0 -1px;
	padding: 0;
	border: 0;
	border-radius: 5px;
	background: #8439cf;
	color: #fff;
	font-weight: 500;
}

.user {
	width: 25px;
	height: 25px;
	line-height: 25px;
	border-radius: 50%;
	background: #efcdf3;
	font-size: 10px;
	font-weight: 600;
	text-align: center;
}

/* workspace */

main {
	flex: 1;
	min-height: 0;
	display: flex;
}

.sidebar {
	display: flex;
	flex-direction: column;
	justify-content: space-between;
	width: 113px;
	border-right: 1px solid #ddd;
}

.tools {
	display: flex;
	flex-direction: column;
	height: 490px;
	font-weight: 500;
}

.tools a {
	flex: 1;
	display: grid;
	grid-template-columns: 18px 1fr;
	align-items: center;
	gap: 9px;
	padding-left: 10px;
}

.tools .icon {
	justify-self: center;
}

.tools .group {
	border-top: 1px solid #e6e6e6;
}

.tools .current {
	background: #8439cf;
	color: #fff;
}

.side-footer {
	display: flex;
	align-items: flex-start;
	gap: 2px;
	height: 50px;
	padding: 9px 11px 0 8px;
	border-top: 1px solid #ccc;
}

.collapse {
	height: 16px;
	margin-left: auto;
}

.viewer {
	flex: 1;
	min-width: 0;
	position: relative;
	overflow: hidden;
	background: #eee;
	border-top: 1px solid #ddd;
}

.page {
	position: relative;
	width: 673px;
	height: 100%;
	margin-left: 95px;
	background: #fff;
	box-shadow: 0 0 3px #bbb;
	font-family: Lato, "Open Sans", sans-serif;
	font-size: 12px;
	line-height: 15px;
	color: #222;
}

.chart {
	display: block;
	width: 348px;
	height: 297px;
	margin-left: 140px;
	margin-top: -1px;
}

.axis {
	fill: none;
	stroke: #555;
}

.ticks {
	font: 14px "Liberation Sans", sans-serif;
	fill: #444;
	text-anchor: middle;
}

.axis-box {
	font: 11px "Liberation Sans", sans-serif;
	fill: #333;
	text-anchor: middle;
}

.axis-box rect {
	fill: #e8e8e8;
	stroke: #777;
}

.questions {
	display: flex;
	flex-direction: column;
	justify-content: space-between;
	height: 187px;
	margin: -3px 0 1px 55px;
	padding: 0;
	list-style: none;
	font-size: 11px;
}

.questions li {
	display: flex;
	align-items: center;
	gap: 1px;
	white-space: nowrap;
}

.questions b {
	width: 56px;
	height: 19px;
	border: 2px solid #111;
	font-size: 12px;
	text-align: center;
}

.choices {
	display: grid;
	grid-template-columns: repeat(4, 108px);
	margin-left: 153px;
}

.ink {
	position: absolute;
	left: 0;
	top: -1px;
	width: 673px;
	height: 560px;
}

.pen {
	fill: none;
	stroke: #111;
	stroke-width: 1.4;
	stroke-linecap: round;
	stroke-linejoin: round;
}

.red-pen {
	stroke: #e8101c;
}

.pen .dot {
	fill: currentColor;
	stroke-width: 2;
}

.red-pen .dot {
	fill: #e8101c;
}

.hand {
	font-family: Lato, sans-serif;
	font-weight: 300;
	fill: #111;
	stroke: #111;
	stroke-width: .3;
}

/* drawing palette */

.palette {
	position: absolute;
	z-index: 1;
	left: 3px;
	top: 143px;
	width: 36px;
	display: flex;
	flex-direction: column;
	align-items: center;
	gap: 12px;
	padding: 7px 0 10px;
	border-radius: 8px;
	background: #f7f5fa;
	box-shadow: 0 0 4px #bbb;
}

.size-box {
	display: flex;
	align-items: center;
	justify-content: space-between;
	width: 25px;
	height: 25px;
	padding: 0 2px;
	border: 1px solid #aaa;
	border-radius: 3px;
}

.size-box select {
	appearance: none;
	width: 10px;
	padding: 0;
	border: 0;
	background: none;
}

.size-box svg {
	width: 6px;
	height: 4px;
}

.square {
	display: flex;
	align-items: center;
	justify-content: center;
	width: 25px;
	height: 25px;
	padding: 0;
	border: 1px solid #aaa;
	border-radius: 3px;
	background: #f9f8fb;
}

.shade {
	background: linear-gradient(to right, #111, #fff);
}

.palette-group, .palette-more {
	display: flex;
	flex-direction: column;
	gap: 22px;
}

.palette-group {
	width: 100%;
	align-items: center;
	margin-top: -6px;
	padding: 10px 0;
	border: solid #e4e0e8;
	border-width: 1px 0;
}

.palette-colors {
	display: flex;
	flex-direction: column;
	align-items: center;
	gap: 2px;
}

.swatch {
	width: 25px;
	height: 25px;
	padding: 0;
	border: 1px solid #bbb;
	border-radius: 50%;
}

.red {
	width: 27px;
	height: 27px;
	border: 2px solid #7f3ac8;
	background: #f00;
}

.black {
	background: #000;
}

.green {
	background: #00ff38;
}

.palette-more {
	margin-top: 9px;
}

/* zoom control */

.zoom-bar {
	position: absolute;
	right: 8px;
	bottom: 13px;
	display: flex;
	align-items: center;
	gap: 7px;
}

.pager {
	display: flex;
	align-items: center;
	gap: 16px;
	height: 27px;
	padding: 0 12px 0 16px;
	border-radius: 5px;
	background: #fff;
	box-shadow: 0 0 6px #ddd;
	font-weight: 500;
}

.page-no {
	padding-right: 13px;
	border-right: 1px solid #eee;
	margin-right: -5px;
}

.help {
	width: 26px;
	height: 26px;
	padding: 0;
	border: 0;
	border-radius: 50%;
	background: #fff;
	box-shadow: 0 0 6px #ddd;
	font-size: 15px;
	font-weight: 600;
}

.scrollbar {
	display: flex;
	flex-direction: column;
	align-items: center;
	width: 11px;
	padding: 4px 0;
	background: #fafafa;
}

.arrow {
	border: solid transparent;
	border-width: 0 4px 5px;
	border-bottom-color: #888;
}

.arrow.down {
	border-width: 5px 4px 0;
	border-top-color: #888;
	margin-top: auto;
}

.thumb {
	width: 6px;
	height: 20%;
	margin-top: 240px;
	border-radius: 3px;
	background: #8c8c8c;
}

/* windows taskbar */

.taskbar {
	display: grid;
	grid-template-columns: 1fr auto 1fr;
	align-items: center;
	flex: none;
	height: 36px;
	border-top: 1px solid #c4bcbc;
	background: linear-gradient(to right, #eddbd6, #dddad9 30%, #dbd8d8 42%, #e7d9d5 52%, #dadada 65%, #dcd9df 85%, #efdcd9);
	font-size: 9px;
	line-height: 12px;
}

.weather {
	display: flex;
	gap: 3px;
	padding-left: 14px;
}

.weather svg {
	width: 21px;
	height: 21px;
}

.weather text {
	font-size: 10px;
	fill: #fff;
	text-anchor: middle;
}

.muted {
	color: #777;
}

.apps {
	display: flex;
	align-items: center;
	gap: 5px;
	padding-left: 5px;
}

.app {
	display: block;
	width: 18px;
	height: 18px;
}

.search {
	display: flex;
	align-items: center;
	gap: 7px;
	width: 163px;
	height: 22px;
	margin: 0 0 0 6px;
	padding: 0 8px;
	border-radius: 11px;
	background: #f5f3f3;
}

.search input {
	width: 100%;
	padding: 0;
	border: 0;
	background: none;
	font-size: 10px;
}

.search input::placeholder {
	color: #666;
}

.app-btn {
	position: relative;
	width: 28px;
	height: 28px;
}

.open::after {
	content: "";
	position: absolute;
	bottom: 0;
	width: 5px;
	height: 2px;
	border-radius: 1px;
	background: #888;
}

.focused {
	border-radius: 3px;
	background: #f4f1ee;
}

.focused::after {
	width: 12px;
	background: #1668a8;
}

.badge {
	position: absolute;
	right: 1px;
	top: 1px;
	width: 12px;
	height: 12px;
	line-height: 12px;
	border-radius: 50%;
	background: #bf3c1c;
	color: #fff;
	font-size: 8px;
	text-align: center;
}

.tray {
	display: flex;
	align-items: center;
	justify-content: flex-end;
	gap: 12px;
	padding-right: 15px;
}

.tray .icon + .icon + .icon + .icon + .icon {
	margin-left: -6px;
}

.mic {
	color: #2769ab;
}

.clock {
	text-align: right;
}

.bell {
	margin-left: -6px;
}
```
